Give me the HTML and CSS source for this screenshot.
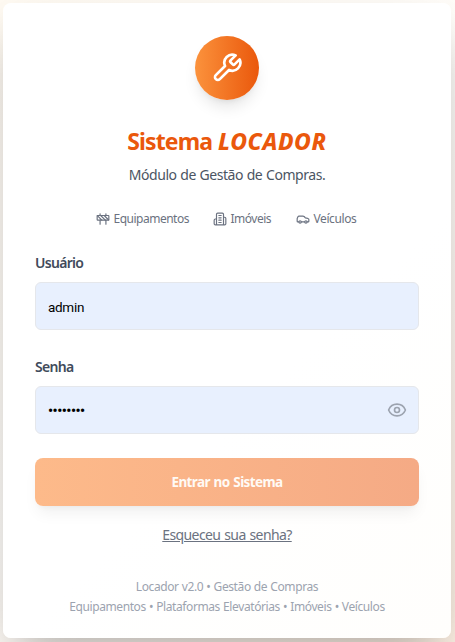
FILE: index.html
```html
<!DOCTYPE html>
<html lang="pt-BR">
<head>
<meta charset="utf-8">
<title>Sistema Locador</title>
<link rel="stylesheet" href="styles.css">
</head>
<body>
<main class="card">
  <header class="header">
    <div class="logo">
      <svg class="icon icon-logo" viewBox="0 0 24 24"><path d="M14.7 6.3a1 1 0 0 0 0 1.4l1.6 1.6a1 1 0 0 0 1.4 0l3.77-3.77a6 6 0 0 1-7.94 7.94l-6.91 6.91a2.12 2.12 0 0 1-3-3l6.91-6.91a6 6 0 0 1 7.94-7.94l-3.76 3.76z"/></svg>
    </div>
    <h1 class="title"><span>Sistema</span><em class="brand">LOCADOR</em></h1>
    <p class="subtitle">Módulo de Gestão de Compras.</p>
    <div class="features">
      <div class="feature">
        <svg class="icon icon-small" viewBox="0 0 24 24"><rect x="2" y="6" width="20" height="8" rx="1"/><path d="M17 14v7M7 14v7M17 3v3M7 3v3M10 14 2.3 6.3M14 6l7.7 7.7M8 6l8 8"/></svg>
        <span class="equip">Equipamentos</span>
      </div>
      <div class="feature">
        <svg class="icon icon-small" viewBox="0 0 24 24"><path d="M6 22V4a2 2 0 0 1 2-2h8a2 2 0 0 1 2 2v18ZM6 12H4a2 2 0 0 0-2 2v6a2 2 0 0 0 2 2h2M18 9h2a2 2 0 0 1 2 2v9a2 2 0 0 1-2 2h-2M10 6h4M10 10h4M10 14h4M10 18h4"/></svg>
        <span class="imoveis">Imóveis</span>
      </div>
      <div class="feature">
        <svg class="icon icon-small" viewBox="0 0 24 24"><path d="M19 17h2c.6 0 1-.4 1-1v-3c0-.9-.7-1.7-1.5-1.9C18.7 10.6 16 10 16 10s-1.3-1.4-2.2-2.3c-.5-.4-1.1-.7-1.8-.7H5c-.6 0-1.1.4-1.4.9l-1.4 2.9A3.7 3.7 0 0 0 2 12v4c0 .6.4 1 1 1h2M9 17h6"/><circle cx="7" cy="17" r="2"/><circle cx="17" cy="17" r="2"/></svg>
        <span class="veiculos">Veículos</span>
      </div>
    </div>
  </header>
  <form class="form">
    <div class="field">
      <label class="label" for="user">Usuário</label>
      <div class="control"><input class="input" id="user" type="text" value="admin"></div>
    </div>
    <div class="field">
      <label class="label">Senha</label>
      <div class="control">
        <span class="input dots">••••••••</span>
        <svg class="icon icon-eye" viewBox="0 0 24 24"><path d="M2.06 12.35a1 1 0 0 1 0-.7 10.75 10.75 0 0 1 19.88 0 1 1 0 0 1 0 .7 10.75 10.75 0 0 1-19.88 0"/><circle cx="12" cy="12" r="3"/></svg>
      </div>
    </div>
    <button class="submit" type="button">Entrar no Sistema</button>
  </form>
  <a class="forgot">Esqueceu sua senha?</a>
  <footer class="footer">
    <p>Locador v2.0 • Gestão de Compras</p>
    <p>Equipamentos • Plataformas Elevatórias • Imóveis • Veículos</p>
  </footer>
</main>
</body>
</html>
```
FILE: styles.css
```css
* { box-sizing: border-box; margin: 0; padding: 0; }
body {
  height: 642px;
  padding: 3px 4px 4px 3px;
  overflow: hidden;
  background: linear-gradient(135deg, #fffaf2, #fffdfa 50%, #fff2e5);
  font-family: "Segoe UI", "Noto Sans", sans-serif;
}
.card {
  display: flex;
  flex-direction: column;
  width: 448px;
  height: 635px;
  padding: 33px 32px 0;
  border-radius: 8px;
  background: linear-gradient(135deg, #fff 60%, #fffefc);
  box-shadow: 0 25px 50px -12px rgba(0, 0, 0, .32);
}
.icon {
  fill: none;
  stroke: currentColor;
  stroke-width: 2;
  stroke-linecap: round;
  stroke-linejoin: round;
  flex: none;
}
.header { display: flex; flex-direction: column; align-items: center; }
.logo {
  display: flex;
  align-items: center;
  justify-content: center;
  width: 64px;
  height: 64px;
  border-radius: 50%;
  background: linear-gradient(90deg, #fb923c, #ea580c);
  box-shadow: 0 10px 15px -3px rgba(0, 0, 0, .1), 0 4px 6px -4px rgba(0, 0, 0, .1);
  color: #fff;
}
.icon-logo { width: 32px; height: 32px; }
.title {
  display: flex;
  gap: 6px;
  margin-top: 25px;
  font-size: 23px;
  line-height: 32px;
  font-weight: 700;
  letter-spacing: -.9px;
  color: #ea580c;
  white-space: nowrap;
}
.brand { font-weight: 800; letter-spacing: .55px; }
.subtitle { margin-top: 8px; font-size: 14px; line-height: 20px; letter-spacing: -.45px; word-spacing: .5px; color: #4b5563; white-space: nowrap; }
.features { display: flex; gap: 24px; margin-top: 26px; }
.feature { display: flex; align-items: center; gap: 4px; font-size: 12px; line-height: 16px; color: #6b7280; white-space: nowrap; }
.icon-small { width: 14px; height: 14px; }
.equip { width: 75px; letter-spacing: -.5px; }
.imoveis { width: 41px; letter-spacing: -.5px; }
.veiculos { width: 45px; letter-spacing: -.4px; }
.form { display: flex; flex-direction: column; gap: 24px; margin-top: 26px; }
.field { display: flex; flex-direction: column; gap: 9px; }
.field:first-child { margin-bottom: 3px; }
.label { font-size: 14px; line-height: 20px; font-weight: 600; letter-spacing: -.7px; color: #414b5b; }
.control {
  display: flex;
  align-items: center;
  height: 48px;
  padding: 0 11px 0 12px;
  border: 1px solid #e5e7eb;
  border-radius: 6px;
  background: #e8f0fe;
}
.input { flex: 1; min-width: 0; border: 0; outline: 0; background: none; font: 400 13.5px/20px Roboto, sans-serif; letter-spacing: -.3px; color: #000; padding-top: 2px; }
.dots { font-size: 14px; font-weight: 700; letter-spacing: -.45px; }
.icon-eye { width: 20px; height: 20px; color: #9ca3af; }
.submit {
  height: 48px;
  border: 0;
  border-radius: 8px;
  background: linear-gradient(90deg, #fdba8a, #f5aa85);
  box-shadow: 0 10px 15px -3px rgba(0, 0, 0, .06), 0 4px 6px -4px rgba(0, 0, 0, .06);
  font: 700 13.5px/20px "Noto Sans", sans-serif;
  letter-spacing: -.6px;
  word-spacing: .8px;
  color: #fffaf5;
}
.forgot { margin-top: 19px; text-align: center; font-size: 14px; line-height: 20px; letter-spacing: -.6px; word-spacing: .8px; color: #6b7280; text-decoration: underline; }
.footer { margin-top: 32px; text-align: center; font-size: 12px; line-height: 20px; color: #9ca3af; white-space: nowrap; letter-spacing: -.4px; word-spacing: .4px; }
```
